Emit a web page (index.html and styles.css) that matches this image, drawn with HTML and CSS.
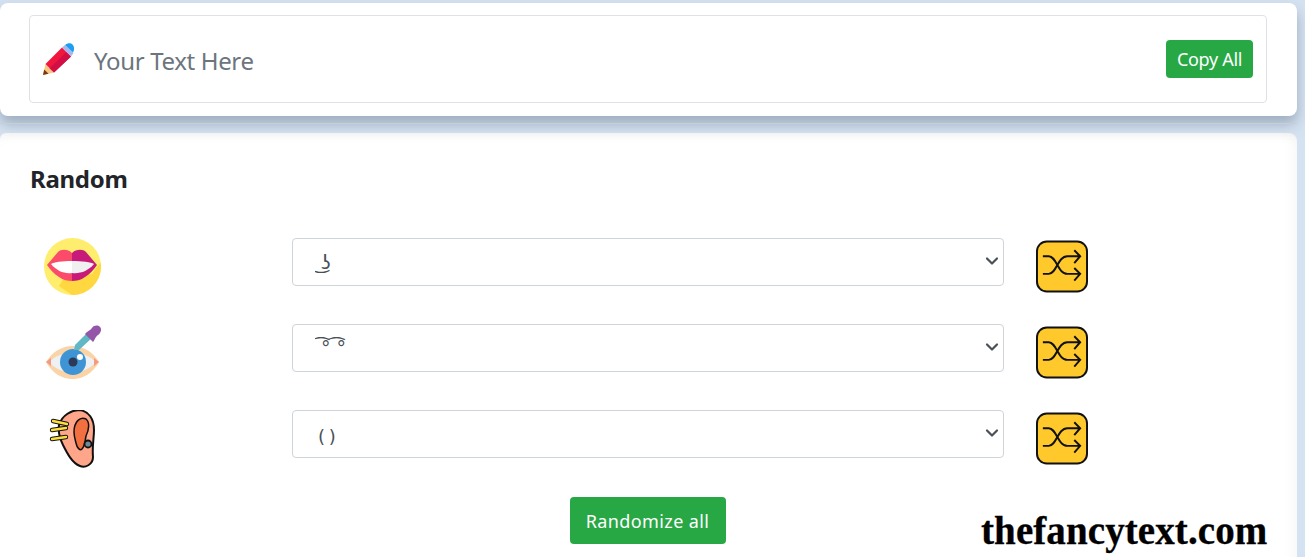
FILE: index.html
```html
<!DOCTYPE html>
<html lang="en">
<head>
  <meta charset="UTF-8">
  <meta name="viewport" content="width=device-width, initial-scale=1.0">
  <title>Fancy Text</title>
  <link rel="stylesheet" href="styles.css">
</head>
<body>
  <div class="page">
    <!-- Text input card -->
    <section class="card top-card">
      <div class="input-box">
        <svg class="pencil" viewBox="0 0 32 32" width="32" height="32">
          <path d="M1 32l2.500-11 8.500 8.500z" fill="#f9c784"/>
          <path d="M1 32l1.200-5.500 4.300 4.300z" fill="#7a3b10"/>
          <path d="M3.500 21L20 4.500l9 9L12 29.500z" fill="#f0163e"/>
          <path d="M7.500 25.200L24.500 9l4.500 4.500L12 29.500z" fill="#d20f44"/>
          <path d="M20 4.500L23 2l8.500 8L29 13.500z" fill="#a9b6ee"/>
          <path d="M23 2c3-2.500 6-2 7.500-.5S33 6 31 9.500z" fill="#1c9ff0"/>
        </svg>
        <span class="placeholder">Your Text Here</span>
        <button class="btn copy-btn">Copy All</button>
      </div>
    </section>

    <hr class="divider">

    <!-- Random section -->
    <section class="card main-card">
      <h2 class="title">Random</h2>

      <div class="row">
        <svg class="row-icon" viewBox="0 0 57 57" width="57" height="57">
          <circle cx="28.500" cy="28.500" r="28.500" fill="#ffee6e"/>
          <path d="M28 57a28.500 28.500 0 0 0 29-28.500c0-2-.2-3-.5-4L48 36 20 40l-5 8z" fill="#ffd740"/>
          <path d="M3 27L14 14c3-3 10-3 14 1v28c-4 0-9-1-13-4C10 36 6 31 3 27z" fill="#fb4a6a"/>
          <path d="M53 27L42 14c-3-3-10-3-14 1v28c4 0 9-1 13-4 5-3 9-8 12-12z" fill="#c81a78"/>
          <path d="M7 26c3-2 11-3 21-3v12c-8 1-15-2-21-9z" fill="#fff"/>
          <path d="M50 26c-3-2-12-3-22-3v12c8 1 16-2 22-9z" fill="#f0f0f0"/>
        </svg>
        <div class="select-wrap">
          <select class="face-select"><option>&nbsp;͜ʖ</option></select>
          <svg class="chevron" viewBox="0 0 14 14" width="14" height="14"><path d="M2 4.500l5 5 5-5" fill="none" stroke="#495057" stroke-width="2.200" stroke-linecap="round" stroke-linejoin="round"/></svg>
        </div>
        <svg class="shuffle" viewBox="0 0 53 53" width="52" height="53">
          <rect x="1" y="1" width="51" height="51" rx="10" fill="#ffc92c" stroke="#111" stroke-width="2"/>
          <path d="M7 16h6c8 0 9 18 19 18h13M7 34h6c8 0 9-18 19-18h13M39 10l6 6-6 7M39 28l6 6-6 7" fill="none" stroke="#111" stroke-width="2"/>
        </svg>
      </div>

      <div class="row">
        <svg class="row-icon" viewBox="0 0 58 58" width="58" height="58">
          <path d="M2 38c6-10 16-16 26.500-16S49 28 55 38c-6 11-16 17-26.500 17S8 49 2 38z" fill="#fad3a6"/>
          <path d="M5 38c6-6 14-9 23.500-9S46 32 52 38c-6 7-14 10-23.500 10S11 45 5 38z" fill="#edf1f3"/>
          <path d="M2 38l5-4v8zM55 38l-5-4v8z" fill="#f49a82"/>
          <circle cx="29" cy="38" r="13" fill="#3f94d6"/>
          <circle cx="29" cy="38" r="4.500" fill="#2c3a57"/>
          <circle cx="36" cy="33" r="3" fill="#fff"/>
          <path d="M30 26l1-5 13-13 5 5-14 13z" fill="#62b7c4"/>
          <path d="M41 10c2-3 5-3 7-6 2-3 6-3 8-1 2 2 1 6-2 8-3 2-3 5-5 7z" fill="#9356a8"/>
        </svg>
        <div class="select-wrap">
          <select class="face-select"><option>&nbsp;͡°&nbsp;͡°</option></select>
          <svg class="chevron" viewBox="0 0 14 14" width="14" height="14"><path d="M2 4.500l5 5 5-5" fill="none" stroke="#495057" stroke-width="2.200" stroke-linecap="round" stroke-linejoin="round"/></svg>
        </div>
        <svg class="shuffle" viewBox="0 0 53 53" width="52" height="53">
          <rect x="1" y="1" width="51" height="51" rx="10" fill="#ffc92c" stroke="#111" stroke-width="2"/>
          <path d="M7 16h6c8 0 9 18 19 18h13M7 34h6c8 0 9-18 19-18h13M39 10l6 6-6 7M39 28l6 6-6 7" fill="none" stroke="#111" stroke-width="2"/>
        </svg>
      </div>

      <div class="row">
        <svg class="row-icon" viewBox="0 0 58 58" width="58" height="58">
          <path d="M15 15C18 5 28 0 35 0c10 1 15 9 15 20 0 8-2 16-1 27 0 8-8 11-13 9-8-3-13-13-17-21-3-6-5-13-4-20z" fill="#ffa68a" stroke="#111" stroke-width="2"/>
          <path d="M30 22c0-10 6-16 12-13 4 3 3 11 0 17-1 5-1 10-4 13-2 2-5-1-6-6-1-4-2-7-2-11z" fill="#f2703f" stroke="#111" stroke-width="1.500"/>
          <circle cx="44" cy="34" r="3.500" fill="#6d8a96" stroke="#111" stroke-width="1.800"/>
          <path d="M9 11l14 3M8 20l14-2M8 29l14-2" stroke="#111" stroke-width="4.400" stroke-linecap="round"/>
          <path d="M9 11l14 3M8 20l14-2M8 29l14-2" stroke="#fbe03c" stroke-width="2.400" stroke-linecap="round"/>
        </svg>
        <div class="select-wrap">
          <select class="face-select paren"><option>( )</option></select>
          <svg class="chevron" viewBox="0 0 14 14" width="14" height="14"><path d="M2 4.500l5 5 5-5" fill="none" stroke="#495057" stroke-width="2.200" stroke-linecap="round" stroke-linejoin="round"/></svg>
        </div>
        <svg class="shuffle" viewBox="0 0 53 53" width="52" height="53">
          <rect x="1" y="1" width="51" height="51" rx="10" fill="#ffc92c" stroke="#111" stroke-width="2"/>
          <path d="M7 16h6c8 0 9 18 19 18h13M7 34h6c8 0 9-18 19-18h13M39 10l6 6-6 7M39 28l6 6-6 7" fill="none" stroke="#111" stroke-width="2"/>
        </svg>
      </div>

      <div class="actions">
        <button class="btn random-btn">Randomize all</button>
      </div>
    </section>
  </div>

  <div class="watermark">thefancytext.com</div>
</body>
</html>
```

FILE: styles.css
```css
html, body {
  height: 557px;
  overflow: hidden;
}
body {
  font-family: "Noto Sans", "Open Sans", sans-serif;
  margin: 0;
  padding: 0;
  background: #d5e2f1;
  color: #212529;
  position: relative;
}
.page {
  width: 1297px;
  padding-top: 3px;
}
.card {
  background: #fff;
  border-radius: 8px;
}
.top-card {
  height: 113px;
  padding: 12px 30px 0 29px;
  box-sizing: border-box;
  box-shadow: 0 8px 14px rgba(110, 130, 150, 0.55);
  position: relative;
}
.input-box {
  display: flex;
  align-items: center;
  height: 88px;
  box-sizing: border-box;
  border: 1px solid #dee2e6;
  border-radius: 4px;
  padding: 0 13px 0 12px;
}
.pencil {
  flex: none;
}
.placeholder {
  margin-left: 20px;
  padding-top: 2px;
  font-size: 24px;
  letter-spacing: -0.35px;
  color: #6c757d;
  flex: 1;
}
.btn {
  background-color: #28a745;
  color: #fff;
  border: none;
  border-radius: 4px;
  font-family: inherit;
  cursor: pointer;
}
.copy-btn {
  width: 87px;
  height: 38px;
  font-size: 18px;
  letter-spacing: -0.3px;
  padding: 0;
}
.divider {
  margin: 7px 0 9px;
  border: none;
  height: 1px;
  background: #c9cdd6;
  position: relative;
}
.main-card {
  height: 430px;
  padding-top: 30px;
  box-sizing: border-box;
  box-shadow: inset 0 12px 12px -10px rgba(0, 0, 0, 0.05), inset -16px 0 14px -12px rgba(0, 0, 0, 0.03);
  border-radius: 6px 8px 0 0;
}
.title {
  margin: 0 0 0 30px;
  font-size: 24px;
  letter-spacing: -0.3px;
  line-height: 32px;
  font-weight: 700;
  height: 75px;
}
.row {
  display: grid;
  grid-template-columns: 262px 712px 85px;
  height: 86px;
  padding-left: 30px;
}
.row-icon {
  margin-left: 14px;
}
.select-wrap {
  position: relative;
  height: 48px;
}
.face-select {
  appearance: none;
  width: 100%;
  height: 100%;
  background: #fff;
  border: 1px solid #ced4da;
  border-radius: 4px;
  padding: 0 12px 0 22px;
  font-family: "DejaVu Sans", sans-serif;
  font-size: 19px;
  color: #495057;
}
.paren {
  padding: 5px 12px 0 25px;
  font-size: 18px;
  word-spacing: -2px;
}
.chevron {
  position: absolute;
  right: 5px;
  top: 16px;
}
.shuffle {
  margin: 2px 0 0 32px;
}
.actions {
  display: flex;
  justify-content: center;
  margin-top: 1px;
  padding-right: 2px;
}
.random-btn {
  width: 156px;
  height: 47px;
  font-size: 18px;
  letter-spacing: 0.4px;
  padding: 0;
}
.watermark {
  position: absolute;
  left: 981px;
  top: 510px;
  font-family: "Liberation Serif", serif;
  font-size: 39px;
  letter-spacing: 0.1px;
  font-weight: 700;
  line-height: 42px;
  color: #000;
  -webkit-text-stroke: 0.3px #000;
}
```
